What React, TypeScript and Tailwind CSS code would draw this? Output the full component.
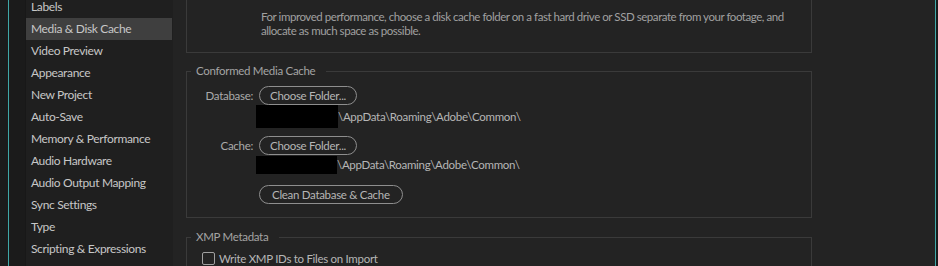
import React from "react";

const items = [
  "Labels",
  "Media & Disk Cache",
  "Video Preview",
  "Appearance",
  "New Project",
  "Auto-Save",
  "Memory & Performance",
  "Audio Hardware",
  "Audio Output Mapping",
  "Sync Settings",
  "Type",
  "Scripting & Expressions",
];

function PillButton({ children, className = "" }: { children: React.ReactNode; className?: string }) {
  return (
    <button
      className={
        "h-[19px] rounded-full border border-[#8e8e8e] text-[11.5px] leading-[17px] tracking-[-0.3px] text-[#b6b6b6] bg-transparent " +
        className
      }
    >
      {children}
    </button>
  );
}

export default function App() {
  return (
    <div className="flex h-[266px] w-[938px] overflow-hidden bg-[#232323] font-['Lato',sans-serif] text-[11.5px] tracking-[-0.3px]">
      {/* left strip */}
      <div className="flex h-full w-[25px] shrink-0 bg-[#1b1b1b]">
        <div className="ml-[8px] h-full w-px bg-[#3fa7a7]" />
      </div>
      {/* sidebar */}
      <div className="flex h-full w-[148px] shrink-0 flex-col border-l border-[#181818] bg-[#1f1f1f]">
        <div className="-mt-[4px] flex flex-col pr-px">
          {items.map((it) => (
            <div
              key={it}
              className={
                "h-[22px] pl-[5px] text-[12px] leading-[22px] tracking-[-0.35px] text-[#c7c7c7] " +
                (it === "Media & Disk Cache" ? "bg-[#3f3f3f]" : "")
              }
            >
              {it}
            </div>
          ))}
        </div>
      </div>
      {/* content */}
      <div className="flex h-full flex-1 flex-col pl-[13px]">
        {/* top panel */}
        <div className="-mt-[10px] h-[63px] w-[626px] shrink-0 whitespace-nowrap border border-[#3a3a3a] pl-[74px] pt-[19px] leading-[14px] tracking-[-0.45px] text-[#a0a0a0]">
          For improved performance, choose a disk cache folder on a fast hard drive or SSD separate from your footage, and
          <br />
          allocate as much space as possible.
        </div>

        {/* conformed media cache */}
        <fieldset className="mt-[10px] w-[626px] shrink-0 border border-[#3a3a3a] pb-[13px]">
          <legend className="ml-[4px] pl-[5px] pr-[11px] leading-[16px] text-[#a4a4a4]">Conformed Media Cache</legend>
          <div className="mt-[7px] flex h-[19px] items-center">
            <span className="w-[66px] text-right text-[#aaaaaa]">Database:</span>
            <PillButton className="ml-[6px] px-[10px]">Choose Folder...</PillButton>
          </div>
          <div className="ml-[69px] flex h-[23px] items-center">
            <div className="h-full w-[82px] bg-black" />
            <span className="text-[#b6b6b6]">\AppData\Roaming\Adobe\Common\</span>
          </div>
          <div className="mt-[8px] flex h-[19px] items-center">
            <span className="w-[66px] text-right text-[#aaaaaa]">Cache:</span>
            <PillButton className="ml-[6px] px-[10px]">Choose Folder...</PillButton>
          </div>
          <div className="ml-[69px] mt-px flex h-[18px] items-center">
            <div className="h-full w-[81px] bg-black" />
            <span className="text-[#b6b6b6]">\AppData\Roaming\Adobe\Common\</span>
          </div>
          <div className="ml-[72px] mt-[11px] flex">
            <PillButton className="px-[12px]">Clean Database &amp; Cache</PillButton>
          </div>
        </fieldset>

        {/* XMP metadata */}
        <fieldset className="mt-[11px] h-[60px] w-[626px] shrink-0 border border-[#3a3a3a]">
          <legend className="ml-[4px] pl-[5px] pr-[11px] leading-[16px] text-[#a4a4a4]">XMP Metadata</legend>
          <div className="ml-[15px] mt-[5px] flex items-center">
            <div className="h-[13px] w-[13px] rounded-[2px] border border-[#a0a0a0]" />
            <span className="ml-[4px] text-[#b6b6b6]">Write XMP IDs to Files on Import</span>
          </div>
        </fieldset>
      </div>
      {/* right edge */}
      <div className="flex h-full w-[3px] shrink-0">
        <div className="h-full w-px bg-[#3fa7a7]" />
        <div className="h-full w-[2px] bg-[#1b1b1b]" />
      </div>
    </div>
  );
}
